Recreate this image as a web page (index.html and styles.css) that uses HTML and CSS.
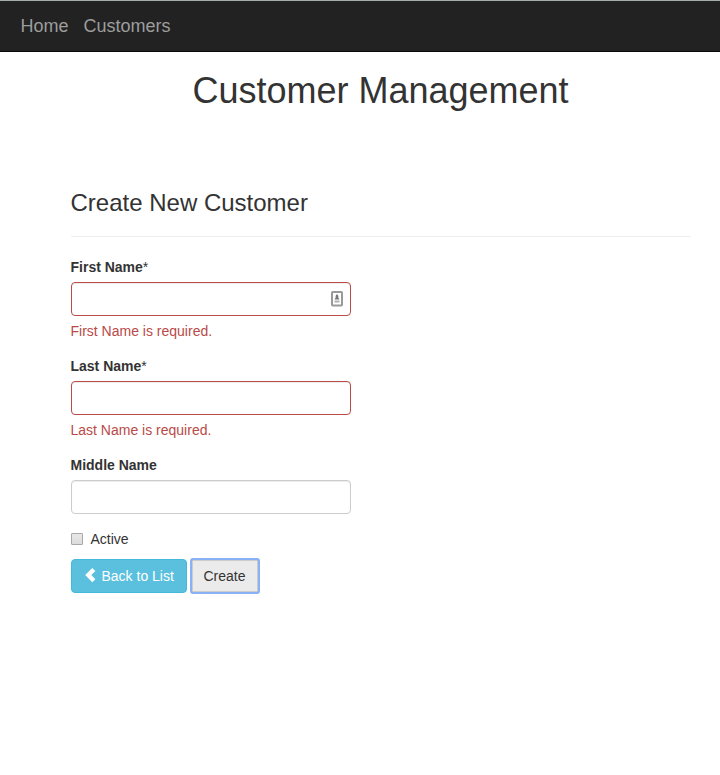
FILE: index.html
```html
<!DOCTYPE html>
<html lang="en">
<head>
<meta charset="utf-8">
<title>Customer Management</title>
<link rel="stylesheet" href="styles.css">
</head>
<body>
<nav class="navbar"><a href="#">Home</a><a href="#">Customers</a></nav>
<h1 class="title">Customer Management</h1>
<main class="content">
  <h2 class="legend">Create New Customer</h2>
  <form>
    <div class="group error">
      <label for="first"><b>First Name</b>*</label>
      <div class="field">
        <input id="first" type="text">
        <svg class="autofill" viewBox="0 0 12 16" width="12" height="16"><rect x="1" y="1" width="10" height="13.5" rx=".8" fill="#fff" stroke="#999" stroke-width="2"/><path d="M6 3 7.5 5 7.2 6.3 8.5 8.5h-5L4.8 6.3 4.5 5Z" fill="#777"/><path d="M3.5 9.5h5v2h-5z" fill="#b0b0b0"/></svg>
      </div>
      <p class="help">First Name is required.</p>
    </div>
    <div class="group error">
      <label for="last"><b>Last Name</b>*</label>
      <div class="field"><input id="last" type="text"></div>
      <p class="help">Last Name is required.</p>
    </div>
    <div class="group">
      <label for="middle"><b>Middle Name</b></label>
      <div class="field"><input id="middle" type="text"></div>
    </div>
    <label class="check"><input type="checkbox">Active</label>
    <div class="actions">
      <button type="button" class="btn back"><svg viewBox="0 0 14 16" width="14" height="16"><path d="M8.2 0 11.4 3 7.3 7.1 11.4 11.2 8.2 14.2 1.2 7.1Z" fill="#fff"/></svg>Back to List</button>
      <button type="button" class="btn create">Create</button>
    </div>
  </form>
</main>
</body>
</html>
```
FILE: styles.css
```css
* { box-sizing: border-box; }
body { margin: 0; min-height: 100vh; background: #fff; color: #333; font: 14px/20px "Liberation Sans", Arial, sans-serif; }
.navbar { height: 52px; display: flex; gap: 15px; padding: 15px 20.5px 0; background: #222; border-top: 1px solid #a7adab; border-bottom: 1px solid #080808; }
.navbar a { color: #9d9d9d; font-size: 18px; line-height: 20px; text-decoration: none; }
.title { margin: 19px 0 0; padding-left: 41px; text-align: center; font-size: 36px; line-height: 40px; font-weight: 400; }
.content { margin: 75px 29px 0 70.5px; }
.legend { margin: 0 0 20px; padding-bottom: 17px; height: 51px; font-size: 24px; line-height: 34px; font-weight: 400; border-bottom: 1px solid #eee; }
.group { width: 280px; margin-bottom: 15px; }
.group label { display: block; height: 20px; margin-bottom: 5px; }
.field { position: relative; height: 34px; }
.field input { display: block; width: 100%; height: 34px; padding: 6px 12px; border: 1px solid #ccc; border-radius: 4px; background: #fff; box-shadow: inset 0 1px 1px rgba(0,0,0,.075); }
.error .field input { border-color: #b94a48; }
.autofill { position: absolute; right: 7.5px; top: 9px; }
.help { margin: 5px 0 0; color: #b94a48; }
.check { display: flex; align-items: center; height: 20px; }
.check input { appearance: none; width: 12px; height: 12px; margin: 0 8px 0 0; border: 1px solid #a8a8a8; border-radius: 1px; background: linear-gradient(#e8e8e8, #dcdcdc); }
.actions { display: flex; gap: 4px; margin-top: 10px; }
.btn { height: 34px; padding: 6px 12px; border: 1px solid #46b8da; border-radius: 4px; font: inherit; color: #fff; }
.back { width: 116px; display: flex; align-items: center; gap: 4px; background: #5bc0de; white-space: nowrap; }
.back svg { flex: none; }
.create { width: 70px; height: 36px; margin: -1px; color: #333; background: #ebebeb; border: 2px solid #8ab0f5; border-radius: 3px; box-shadow: inset 0 0 0 .5px #adadad; outline: none; }
```
